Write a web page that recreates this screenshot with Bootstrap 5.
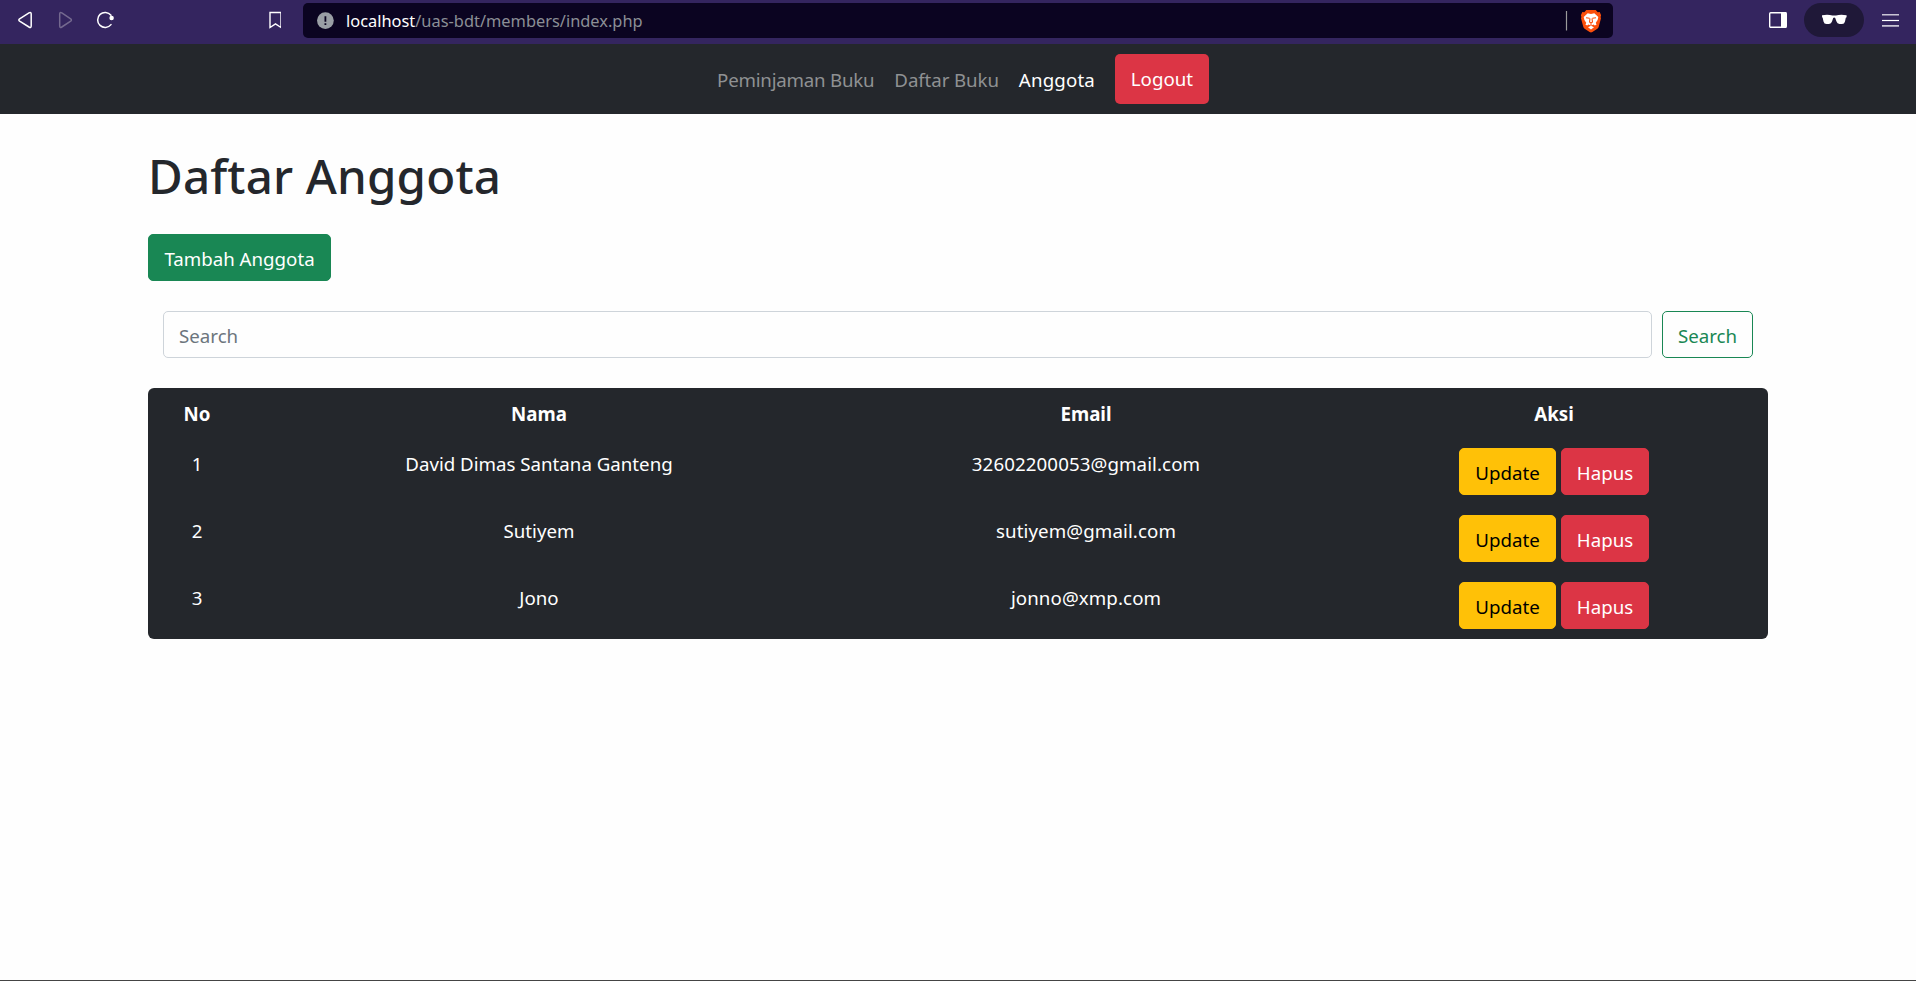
<!DOCTYPE html>
<html lang="id">
<head>
<meta charset="utf-8">
<meta name="viewport" content="width=device-width, initial-scale=1">
<title>Daftar Anggota</title>
<link href="https://cdn.jsdelivr.net/npm/bootstrap@5.3.0/dist/css/bootstrap.min.css" rel="stylesheet">
<style>
html{font-size:20px}
body{font-family:"Noto Sans","Open Sans",sans-serif;font-size:18.7px;line-height:30px;background:#fefefe;color:#212529;height:981px;overflow:hidden;border-bottom:1px solid #444}
.btn,.form-control{font-size:18.7px;line-height:30px;border-radius:5px;white-space:nowrap}
.btn{padding:8.5px 0 6.5px}
.form-control,.form-control:focus{padding:8.5px 15px 6.5px;border-color:#ced4da;background:#fefefe}
.form-control::placeholder{color:#6c757d}
.browser-bar{height:44px;background:#34255f}
.browser-bar svg{display:block;flex:none}
.url-box{width:1310px;height:35px;margin:0 156px 3px 22px;background:#0b0421;border-radius:5px;color:#8b8f96;font-size:16.4px;line-height:35px}
.url-box .host{color:#fff}
.incognito{width:60px;height:34px;margin:0 18px 4px 17px;border-radius:17px;background:#1f1838}
.site-nav{height:70px;background:#24272c}
.site-nav .nav-link{padding:11px 10px 9px;color:#8f9193;white-space:nowrap}
.site-nav .nav-link.active{color:#fff;letter-spacing:.15px}
.site-nav .loan{letter-spacing:-.22px}
.site-nav .return-list{letter-spacing:-.1px}
.site-nav .nav-link.btn{width:94px;margin-left:10px;border:0;color:#fff;line-height:30px;padding:10px 0;border-radius:5px}
.wrap{max-width:1650px;padding:0 15px}
h1{font-size:47.5px;line-height:60px;font-weight:500;letter-spacing:.16px;margin:0;padding:32px 0 28px;color:#24272c}
.members{background:#24272c;border-radius:6px;overflow:hidden;table-layout:fixed;width:1620px}
.members th,.members td{background:transparent;color:#fff;border:0;padding:11px 10px 9px}
.members td:last-child{padding:10px}
.members td:nth-child(3){letter-spacing:.1px}
.search-form{margin:30px 15px}
.col-no{width:98px}.col-name{width:586px}.col-mail{width:508px}.col-action{width:428px}
.w-up{width:97px}.w-hp{width:88px;margin-left:5px}.w-se{width:91px}.w-add{width:183px}
</style>
</head>
<body>
<header class="browser-bar d-flex align-items-center">
  <svg width="125" height="44" fill="none" stroke="#fff" stroke-width="1.5" stroke-linejoin="round" stroke-linecap="round">
    <path d="M19.6 18.9 29 12.8Q31.2 11.7 31.2 14V25.8Q31.2 28.3 29 27L19.6 21.1Q18.1 20 19.6 18.9Z"/>
    <path stroke="#74698f" d="M70.7 18.9 61.8 12.8Q59.7 11.7 59.7 14V25.8Q59.7 28.3 61.8 27L70.7 21.1Q72.1 20 70.7 18.9Z"/>
    <path d="M111 15.2A7.5 7.5 0 1 0 111 24.6"/><circle cx="111.6" cy="18" r="1.5" fill="#fff"/>
  </svg>
  <svg width="156" height="44" fill="none" stroke="#fff" stroke-width="1.4"><path d="M145 12.5h11v15l-5.5-3.6-5.5 3.6z"/></svg>
  <div class="url-box d-flex align-items-center">
    <svg width="43" height="35"><circle cx="22.4" cy="17.6" r="8.4" fill="#9a9fa5"/><path d="M22.4 13.2v5.6M22.4 20.3v1.8" stroke="#0b0421" stroke-width="1.8"/></svg>
    <span class="flex-grow-1"><span class="host">localhost</span>/uas-bdt/members/index.php</span>
    <svg width="50" height="35" viewBox="1563 3 50 35">
      <path d="M1566.5 11v19.5" stroke="#9b9b9b" stroke-width="1.2"/>
      <path fill="#fb4f0b" d="M1586.3 10h9.4l2 2.2 2-.2 1.4 3.3-.5 1.6.4 1.4-2.2 8.3q-.4 1.5-1.8 2.5l-4.6 2.9q-1.4.9-2.8 0l-4.6-2.9q-1.4-1-1.8-2.5L1581 18.3l.4-1.4-.5-1.6 1.4-3.3 2 .2z"/>
      <path fill="#fff" d="M1587.7 13.3 1591 14l3.3-.7 4 3.6-.7 3.2-1.8 2.7.7 2-1.8.6-1-.8-2.700 1-2.700-1-1 .8-1.8-.6.7-2-1.8-2.7-.7-3.2zM1588 27.3l3-1.6 3 1.6-3 2.3z"/>
      <path fill="none" stroke="#fb4f0b" stroke-width="1.1" d="m1586 17.7 3.6.5M1596 17.7l-3.6.5M1590 18.5l-.5 3.5 1.5 1 1.5-1-.5-3.5M1591 23v2.2"/>
    </svg>
  </div>
  <svg width="18" height="44"><rect x=".7" y="12.7" width="16.6" height="14.6" rx="1" fill="none" stroke="#fff" stroke-width="1.4"/><path d="M12 12h5.3v16H12z" fill="#fff"/></svg>
  <div class="incognito"><svg width="60" height="34" viewBox="1804 3 60 34"><path fill="#fff" d="M1822 15.2Q1828 14 1832.5 15.5h3.5Q1840.5 14 1846.600 15.2v2l-.8.5-.8 3.8q-.6 2.5-3 2.5h-2.5q-2.3 0-3-2.4l-1.3-3.700q-1-.9-2 0l-1.2 3.700q-.7 2.400-3 2.400h-2.500q-2.400 0-3-2.500l-.8-3.800-.6-.5z"/></svg></div>
  <svg width="18" height="44"><path d="M0 14.7h17M0 25.9h17" stroke="#c9c5d5" stroke-width="1.6"/><path d="M0 20.5h17" stroke="#fff" stroke-width="1.2"/></svg>
</header>
<nav class="site-nav d-flex justify-content-center align-items-center">
  <a class="nav-link loan" href="#">Peminjaman Buku</a>
  <a class="nav-link return-list" href="#">Daftar Buku</a>
  <a class="nav-link active" href="#">Anggota</a>
  <a class="nav-link btn btn-danger" href="#">Logout</a>
</nav>
<main class="wrap mx-auto">
  <h1>Daftar Anggota</h1>
  <a class="btn btn-success w-add d-block" href="#">Tambah Anggota</a>
  <form class="search-form d-flex gap-2">
    <input class="form-control" type="search" placeholder="Search" aria-label="Search">
    <button class="btn btn-outline-success w-se flex-shrink-0" type="button">Search</button>
  </form>
  <table class="table members text-center mb-0">
    <colgroup><col class="col-no"><col class="col-name"><col class="col-mail"><col class="col-action"></colgroup>
    <thead><tr><th>No</th><th>Nama</th><th>Email</th><th>Aksi</th></tr></thead>
    <tbody>
      <tr><td>1</td><td>David Dimas Santana Ganteng</td><td>32602200053@gmail.com</td><td><div class="d-flex justify-content-center"><a class="btn btn-warning w-up" href="#">Update</a><a class="btn btn-danger w-hp" href="#">Hapus</a></div></td></tr>
      <tr><td>2</td><td>Sutiyem</td><td>sutiyem@gmail.com</td><td><div class="d-flex justify-content-center"><a class="btn btn-warning w-up" href="#">Update</a><a class="btn btn-danger w-hp" href="#">Hapus</a></div></td></tr>
      <tr><td>3</td><td>Jono</td><td>jonno@xmp.com</td><td><div class="d-flex justify-content-center"><a class="btn btn-warning w-up" href="#">Update</a><a class="btn btn-danger w-hp" href="#">Hapus</a></div></td></tr>
    </tbody>
  </table>
</main>
<script src="https://cdn.jsdelivr.net/npm/bootstrap@5.3.0/dist/js/bootstrap.bundle.min.js"></script>
</body>
</html>
